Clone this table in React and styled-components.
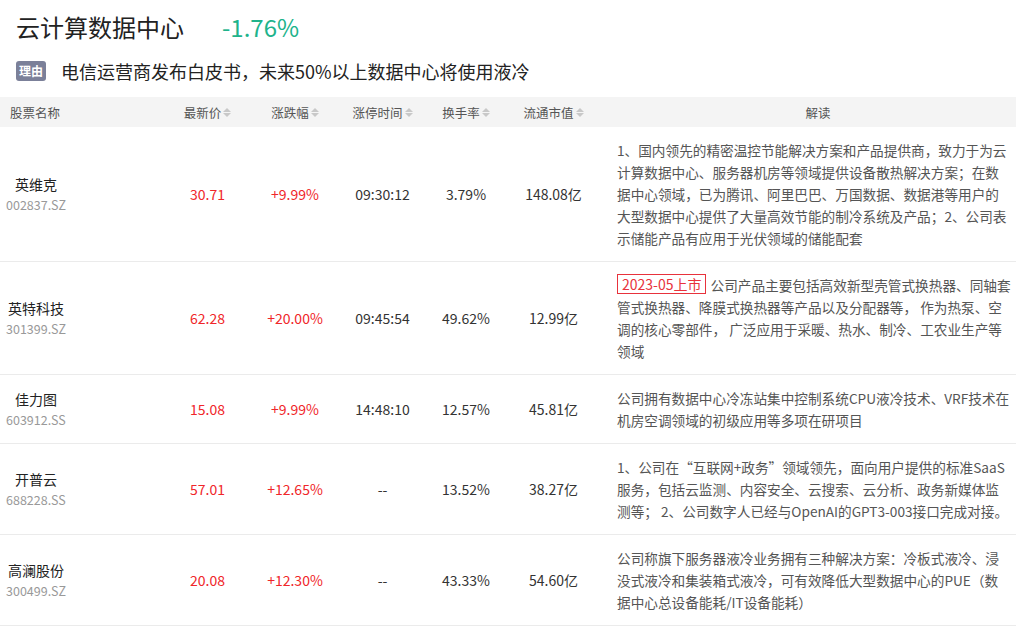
import React from 'react';
import styled, { createGlobalStyle } from 'styled-components';

const GlobalStyle = createGlobalStyle`
  html, body {
    margin: 0;
    padding: 0;
    background: #fff;
    overflow: hidden;
  }
  body {
    font-family: "Noto Sans CJK SC", "Noto Sans", sans-serif;
    color: #333;
  }
`;

const Page = styled.div`
  width: 1036px;
`;

const Header = styled.div`
  padding: 9px 16px 0;
`;

const TitleRow = styled.div`
  display: flex;
  align-items: baseline;
  gap: 38px;
  height: 40px;
`;

const Title = styled.h1`
  margin: 0;
  font-size: 24px;
  font-weight: 400;
  color: #222;
`;

const Change = styled.span`
  font-size: 24px;
  color: #20b38b;
`;

const ReasonRow = styled.div`
  display: flex;
  align-items: center;
  gap: 15px;
  height: 43px;
`;

const Badge = styled.span`
  display: inline-flex;
  align-items: center;
  justify-content: center;
  width: 30px;
  height: 20px;
  border-radius: 3px;
  background: #7b8099;
  color: #fff;
  font-size: 12px;
  font-weight: 700;
`;

const Reason = styled.span`
  font-size: 18px;
  color: #222;
`;

const Table = styled.div`
  margin-top: 5px;
  display: grid;
  grid-template-columns: 165px 85px 90px 85px 82px 93px 436px;
`;

const Th = styled.div`
  background: #f4f4f4;
  height: 30px;
  display: flex;
  align-items: center;
  justify-content: ${p => (p.$left ? 'flex-start' : 'center')};
  padding-left: ${p => (p.$left ? '10px' : '0')};
  font-size: 12.5px;
  color: #555;
`;

const Sort = styled.span`
  display: inline-flex;
  flex-direction: column;
  gap: 1px;
  margin-left: 2px;
  &::before, &::after {
    content: '';
    width: 0;
    height: 0;
    border-left: 4px solid transparent;
    border-right: 4px solid transparent;
  }
  &::before { border-bottom: 4px solid #c8c8c8; }
  &::after { border-top: 4px solid #c8c8c8; }
`;

const Td = styled.div`
  display: flex;
  align-items: center;
  justify-content: ${p => (p.$left ? 'flex-start' : 'center')};
  padding-left: ${p => (p.$left ? '6px' : '0')};
  border-bottom: 1px solid #ebebeb;
  font-size: 14px;
  color: ${p => (p.$red ? '#f0262a' : '#333')};
`;

const NameBox = styled.div`
  display: inline-flex;
  flex-direction: column;
  align-items: center;
  gap: 1px;
`;

const Name = styled.span`
  font-size: 14px;
  color: #222;
`;

const Code = styled.span`
  font-size: 12.5px;
  color: #999;
`;

const Desc = styled.div`
  border-bottom: 1px solid #ebebeb;
  padding: 12px 25px 12px 17px;
  font-size: 13.65px;
  line-height: 22px;
  color: #555;
  word-break: break-all;
`;

const Tag = styled.span`
  display: inline-block;
  vertical-align: top;
  border: 1px solid #e8323c;
  color: #e8323c;
  font-size: 14px;
  line-height: 18px;
  padding: 0 4px;
  margin-right: 4px;
`;

const rows = [
  {
    name: '英维克', code: '002837.SZ', price: '30.71', pct: '+9.99%', time: '09:30:12',
    turn: '3.79%', cap: '148.08亿',
    desc: '1、国内领先的精密温控节能解决方案和产品提供商，致力于为云计算数据中心、服务器机房等领域提供设备散热解决方案；在数据中心领域，已为腾讯、阿里巴巴、万国数据、数据港等用户的大型数据中心提供了大量高效节能的制冷系统及产品；2、公司表示储能产品有应用于光伏领域的储能配套',
  },
  {
    name: '英特科技', code: '301399.SZ', price: '62.28', pct: '+20.00%', time: '09:45:54',
    turn: '49.62%', cap: '12.99亿', tag: '2023-05上市',
    desc: '公司产品主要包括高效新型壳管式换热器、同轴套管式换热器、降膜式换热器等产品以及分配器等， 作为热泵、空调的核心零部件， 广泛应用于采暖、热水、制冷、工农业生产等领域',
  },
  {
    name: '佳力图', code: '603912.SS', price: '15.08', pct: '+9.99%', time: '14:48:10',
    turn: '12.57%', cap: '45.81亿',
    desc: '公司拥有数据中心冷冻站集中控制系统CPU液冷技术、VRF技术在机房空调领域的初级应用等多项在研项目',
  },
  {
    name: '开普云', code: '688228.SS', price: '57.01', pct: '+12.65%', time: '--',
    turn: '13.52%', cap: '38.27亿',
    desc: '1、公司在“互联网+政务”领域领先，面向用户提供的标准SaaS服务，包括云监测、内容安全、云搜索、云分析、政务新媒体监测等； 2、公司数字人已经与OpenAI的GPT3-003接口完成对接。',
  },
  {
    name: '高澜股份', code: '300499.SZ', price: '20.08', pct: '+12.30%', time: '--',
    turn: '43.33%', cap: '54.60亿',
    desc: '公司称旗下服务器液冷业务拥有三种解决方案：冷板式液冷、浸没式液冷和集装箱式液冷，可有效降低大型数据中心的PUE（数据中心总设备能耗/IT设备能耗）',
  },
];

const columns = ['最新价', '涨跌幅', '涨停时间', '换手率', '流通市值'];

export default function App() {
  return (
    <Page>
      <GlobalStyle />
      <Header>
        <TitleRow>
          <Title>云计算数据中心</Title>
          <Change>-1.76%</Change>
        </TitleRow>
        <ReasonRow>
          <Badge>理由</Badge>
          <Reason>电信运营商发布白皮书，未来50%以上数据中心将使用液冷</Reason>
        </ReasonRow>
      </Header>
      <Table>
        <Th $left>股票名称</Th>
        {columns.map(c => (
          <Th key={c}>{c}<Sort /></Th>
        ))}
        <Th>解读</Th>
        {rows.map(r => (
          <React.Fragment key={r.code}>
            <Td $left>
              <NameBox>
                <Name>{r.name}</Name>
                <Code>{r.code}</Code>
              </NameBox>
            </Td>
            <Td $red>{r.price}</Td>
            <Td $red>{r.pct}</Td>
            <Td>{r.time}</Td>
            <Td>{r.turn}</Td>
            <Td>{r.cap}</Td>
            <Desc>
              {r.tag && <Tag>{r.tag}</Tag>}
              {r.desc}
            </Desc>
          </React.Fragment>
        ))}
      </Table>
    </Page>
  );
}
